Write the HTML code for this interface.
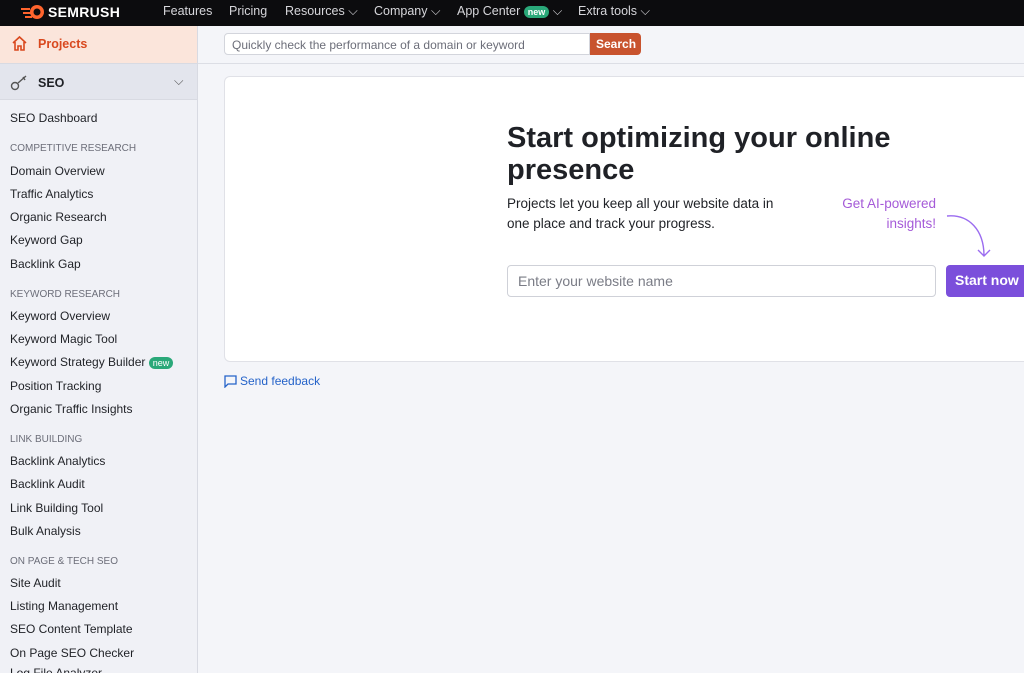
<!DOCTYPE html>
<html style="overflow:hidden;height:673px"><head><meta charset="utf-8"><style>
*{box-sizing:border-box;margin:0;padding:0}
body{width:1024px;height:673px;overflow:hidden;font-family:"Liberation Sans",Arial,sans-serif;background:#f4f5f9;position:relative;color:#1f2126}
.top{position:absolute;left:0;top:0;width:1024px;height:26px;background:#0c0c0e;color:#d6d6da;font-size:12.5px}
.top span{position:absolute;top:4px}
.new{background:#2aa879;color:#fff;border-radius:7px;font-size:9px;padding:1px 4px}
.side{position:absolute;left:0;top:26px;width:198px;height:647px;background:#f0f1f6;border-right:1px solid #d8dae2}
.proj{height:37px;background:#fbe5db;color:#d9481e;font-weight:bold;font-size:12.5px;padding:11px 0 0 38px;position:relative}
.seo{height:37px;background:#e3e5ed;font-weight:bold;font-size:12.5px;padding:12px 0 0 38px;position:relative;border-top:1px solid #d8dae2;border-bottom:1px solid #d8dae2}
.it{position:absolute;left:10px;font-size:12px;color:#1f2126}
.hd{position:absolute;left:10px;font-size:10px;color:#6c6e79}
.sb{position:absolute;left:224px;top:33px;width:366px;height:22px;background:#fff;border:1px solid #d3d5dc;border-radius:4px 0 0 4px;font-size:12px;color:#6c6e79;padding:4px 7px}
.sbtn{position:absolute;left:590px;top:33px;width:51px;height:22px;background:#c8532e;color:#fff;font-size:12px;font-weight:bold;border-radius:0 4px 4px 0;padding:4px 0 0 6px}
.card{position:absolute;left:224px;top:76px;width:810px;height:286px;background:#fff;border:1px solid #e0e1e7;border-radius:6px}
</style></head><body>
<div class="top">
<svg style="position:absolute;left:20px;top:4px" width="26" height="16" viewBox="0 0 26 16"><path d="M1 5h9M3 9h8M5 13h7" stroke="#ff642d" stroke-width="2"/><circle cx="17" cy="8" r="7" fill="#ff642d"/><circle cx="17" cy="8" r="3.5" fill="#0c0c0e"/></svg>
<span style="left:48px;top:4px;color:#fff;font-weight:bold;font-size:14px;letter-spacing:.3px">SEMRUSH</span>
<span style="left:163px">Features</span><span style="left:229px">Pricing</span><span style="left:285px">Resources ⌵</span><span style="left:374px">Company ⌵</span><span style="left:457px">App Center <b class="new">new</b> ⌵</span><span style="left:578px">Extra tools ⌵</span>
</div>
<div class="side">
<div class="proj"><svg style="position:absolute;left:11px;top:9px" width="17" height="17" viewBox="0 0 17 17" fill="none" stroke="#d9481e" stroke-width="1.6"><path d="M2 8L8.5 2 15 8M4 7v8h3v-4h3v4h3V7"/></svg>Projects</div>
<div class="seo"><svg style="position:absolute;left:10px;top:10px" width="20" height="18" viewBox="0 0 20 18" fill="none" stroke="#555" stroke-width="1.4"><circle cx="5" cy="12" r="3.5"/><path d="M8 9l8-7M13 3l2 3"/></svg>SEO<span style="position:absolute;left:174px;top:10px;font-weight:normal;color:#555">⌵</span></div>
</div>
<div class="it" style="top:111px">SEO Dashboard</div>
<div class="hd" style="top:143px">COMPETITIVE RESEARCH</div>
<div class="it" style="top:164px">Domain Overview</div>
<div class="it" style="top:187px">Traffic Analytics</div>
<div class="it" style="top:210px">Organic Research</div>
<div class="it" style="top:233px">Keyword Gap</div>
<div class="it" style="top:257px">Backlink Gap</div>
<div class="hd" style="top:289px">KEYWORD RESEARCH</div>
<div class="it" style="top:309px">Keyword Overview</div>
<div class="it" style="top:332px">Keyword Magic Tool</div>
<div class="it" style="top:355px">Keyword Strategy Builder <span class="new">new</span></div>
<div class="it" style="top:379px">Position Tracking</div>
<div class="it" style="top:402px">Organic Traffic Insights</div>
<div class="hd" style="top:434px">LINK BUILDING</div>
<div class="it" style="top:454px">Backlink Analytics</div>
<div class="it" style="top:477px">Backlink Audit</div>
<div class="it" style="top:501px">Link Building Tool</div>
<div class="it" style="top:524px">Bulk Analysis</div>
<div class="hd" style="top:556px">ON PAGE &amp; TECH SEO</div>
<div class="it" style="top:576px">Site Audit</div>
<div class="it" style="top:599px">Listing Management</div>
<div class="it" style="top:622px">SEO Content Template</div>
<div class="it" style="top:646px">On Page SEO Checker</div>
<div class="it" style="top:666px">Log File Analyzer</div>
<div class="sb">Quickly check the performance of a domain or keyword</div>
<div class="sbtn">Search</div>
<div style="position:absolute;left:198px;top:63px;width:826px;height:1px;background:#dcdee5"></div>
<div class="card"></div>
<div style="position:absolute;left:507px;top:122px;font-size:29px;font-weight:bold;line-height:32px;width:420px;color:#1f2126">Start optimizing your online presence</div>
<div style="position:absolute;left:507px;top:194px;font-size:13.5px;line-height:20px;width:290px">Projects let you keep all your website data in one place and track your progress.</div>
<div style="position:absolute;left:800px;top:194px;width:136px;text-align:right;font-size:13.5px;line-height:20px;color:#a55ad8">Get AI-powered insights!</div>
<svg style="position:absolute;left:944px;top:212px" width="50" height="48" viewBox="0 0 50 48" fill="none" stroke="#9b6cf0" stroke-width="1.4"><path d="M3 4C25 2 40 18 40 44M34 38l6 6 6-6"/></svg>
<div style="position:absolute;left:507px;top:265px;width:429px;height:32px;border:1px solid #cfd1d8;border-radius:4px;font-size:14px;color:#7a7c86;padding:7px 10px">Enter your website name</div>
<div style="position:absolute;left:946px;top:265px;width:80px;height:32px;background:#7b4fdb;border-radius:4px 0 0 4px;color:#fff;font-size:14px;font-weight:bold;padding:7px 0 0 9px">Start now</div>
<svg style="position:absolute;left:224px;top:375px" width="13" height="13" viewBox="0 0 13 13" fill="none" stroke="#2563c9" stroke-width="1.3"><path d="M1 1h11v8H4l-3 3z"/></svg>
<div style="position:absolute;left:240px;top:374px;font-size:12px;color:#2563c9">Send feedback</div>
</body></html>
